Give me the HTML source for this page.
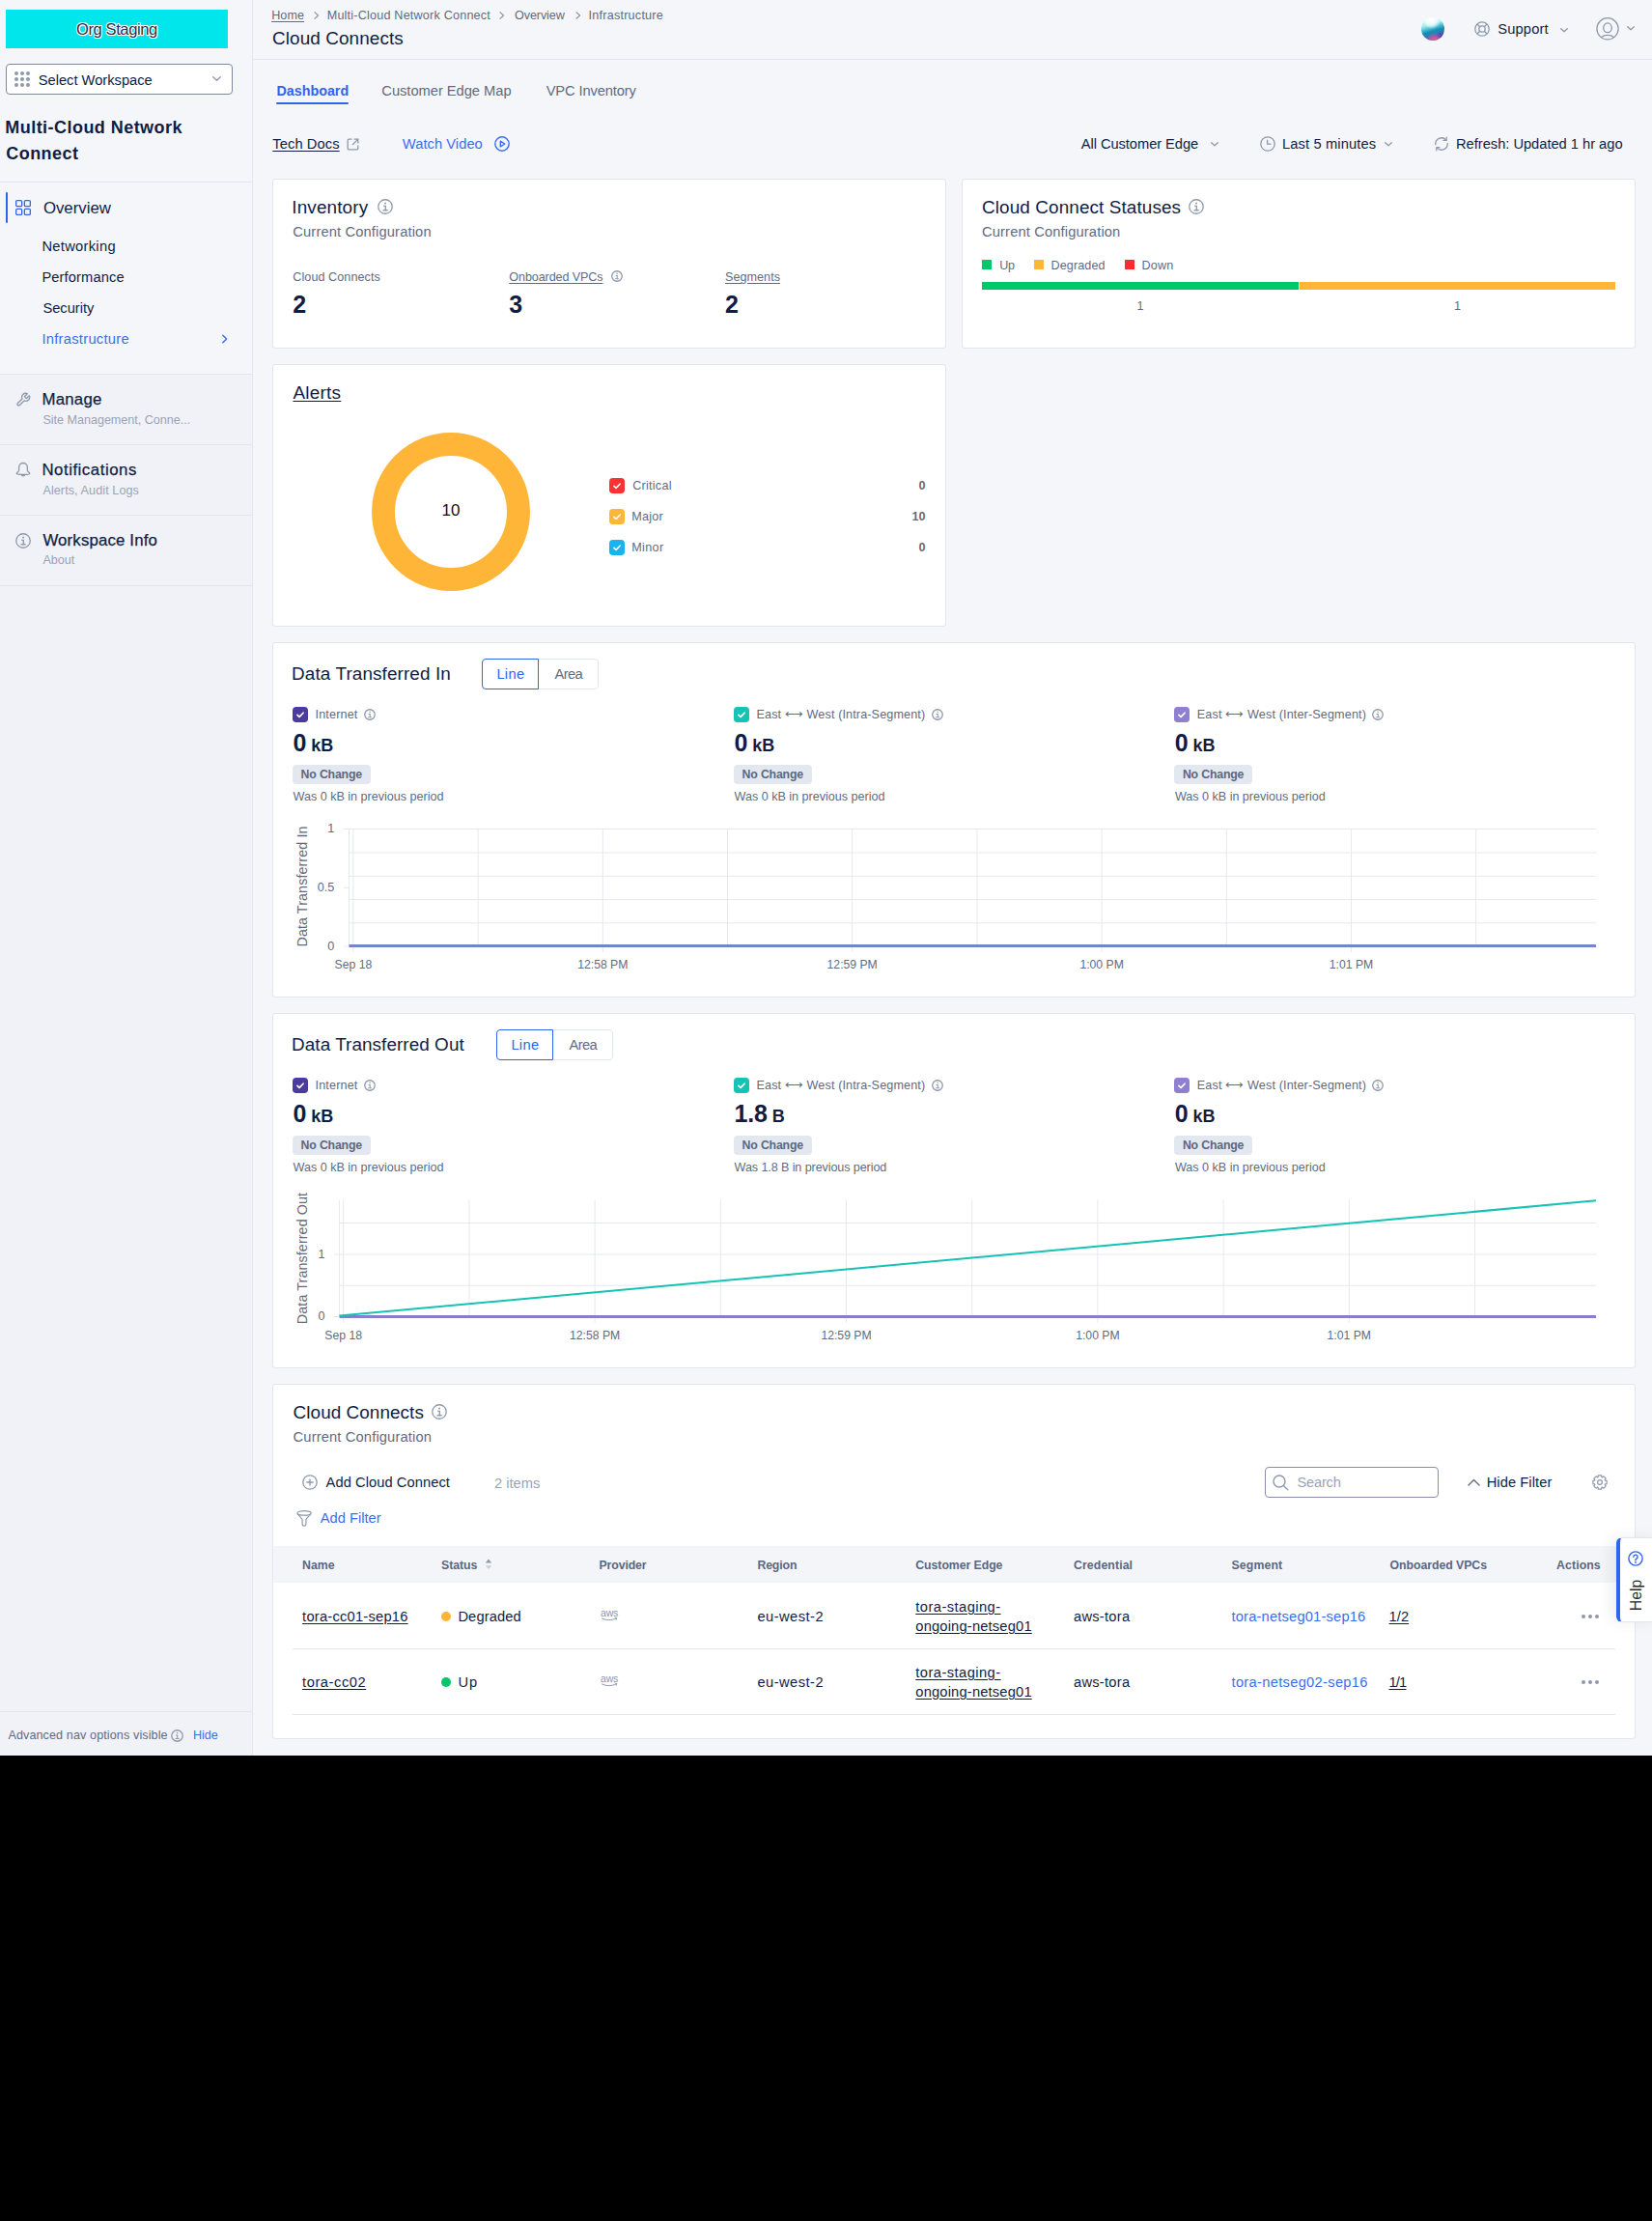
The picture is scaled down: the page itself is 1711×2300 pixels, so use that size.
<!DOCTYPE html>
<html><head><meta charset="utf-8"><title>Cloud Connects</title>
<style>
html,body{margin:0;padding:0;}
body{width:1711px;height:2300px;background:#000;overflow:hidden;font-family:"Liberation Sans", sans-serif;}
#page{position:absolute;left:0;top:0;width:1711px;height:1818px;background:#f5f6f9;overflow:hidden;}
.t{position:absolute;white-space:nowrap;font-family:"Liberation Sans", sans-serif;}
.a{position:absolute;}
.u{text-decoration:underline;text-underline-offset:2px;text-decoration-thickness:1px;}
.card{position:absolute;background:#fff;border:1px solid #e2e6ee;border-radius:3px;box-sizing:border-box;}
</style></head><body><div id="page">
<div class="a" style="left:0px;top:0px;width:261px;height:1818px;background:#f5f6f9;"></div>
<div class="a" style="left:0px;top:388px;width:261px;height:1430px;background:#f1f2f7;"></div>
<div class="a" style="left:261px;top:0px;width:1px;height:1818px;background:#e2e6ee;"></div>
<div class="a" style="left:6px;top:10px;width:230px;height:40px;background:#00e6ea;"></div>
<div class="t" style="left:79.00px;top:22.00px;font-size:16.5px;line-height:16.5px;color:#27304d;letter-spacing:-0.387px;text-shadow:1px 0 0 #fff,-1px 0 0 #fff,0 1px 0 #fff,0 -1px 0 #fff,0.7px 0.7px 0 #fff,-0.7px -0.7px 0 #fff,0.7px -0.7px 0 #fff,-0.7px 0.7px 0 #fff;">Org Staging</div>
<div class="a" style="left:6px;top:66px;width:235px;height:32px;background:#fff;border:1px solid #7d889e;border-radius:4px;box-sizing:border-box;"></div>
<svg class="a" style="left:15px;top:74px;" width="17" height="17" viewBox="0 0 17 17" fill="none"><circle cx="2" cy="2" r="2" fill="#8e99ac"/><circle cx="2" cy="8" r="2" fill="#8e99ac"/><circle cx="2" cy="14" r="2" fill="#8e99ac"/><circle cx="8" cy="2" r="2" fill="#8e99ac"/><circle cx="8" cy="8" r="2" fill="#8e99ac"/><circle cx="8" cy="14" r="2" fill="#8e99ac"/><circle cx="14" cy="2" r="2" fill="#8e99ac"/><circle cx="14" cy="8" r="2" fill="#8e99ac"/><circle cx="14" cy="14" r="2" fill="#8e99ac"/></svg>
<div class="t" style="left:39.70px;top:76.00px;font-size:14.7px;line-height:14.7px;color:#0f1d45;letter-spacing:-0.002px;">Select Workspace</div>
<svg class="a" style="left:219.5px;top:79.25px;" width="9" height="5.5" viewBox="0 0 9 5.5" fill="none"><path d="M0.7 0.7L4.5 4.3L8.3 0.7" stroke="#8e99ac" stroke-width="1.3" stroke-linecap="round" stroke-linejoin="round"/></svg>
<div class="t" style="left:5.30px;top:122.86px;font-size:18px;line-height:18px;color:#0f1d45;font-weight:700;letter-spacing:0.457px;">Multi-Cloud Network</div>
<div class="t" style="left:6.30px;top:149.76px;font-size:18px;line-height:18px;color:#0f1d45;font-weight:700;letter-spacing:0.432px;">Connect</div>
<div class="a" style="left:0px;top:188px;width:261px;height:1px;background:#e2e6ee;"></div>
<div class="a" style="left:6px;top:199px;width:2px;height:32px;background:#2f64f0;border-radius:1px;"></div>
<svg class="a" style="left:16px;top:207px;" width="16" height="16" viewBox="0 0 16 16" fill="none"><rect x="0.65" y="0.65" width="6" height="6" rx="1.2" stroke="#3165f0" stroke-width="1.3"/><rect x="9.35" y="0.65" width="6" height="6" rx="1.2" stroke="#3165f0" stroke-width="1.3"/><rect x="0.65" y="9.35" width="6" height="6" rx="1.2" stroke="#3165f0" stroke-width="1.3"/><rect x="9.35" y="9.35" width="6" height="6" rx="1.2" stroke="#3165f0" stroke-width="1.3"/></svg>
<div class="t" style="left:44.90px;top:208.00px;font-size:16.8px;line-height:16.8px;color:#0f1d45;letter-spacing:0.012px;">Overview</div>
<div class="t" style="left:43.40px;top:248.00px;font-size:14.7px;line-height:14.7px;color:#0f1d45;letter-spacing:0.3px;">Networking</div>
<div class="t" style="left:43.40px;top:280.00px;font-size:14.7px;line-height:14.7px;color:#0f1d45;letter-spacing:0.119px;">Performance</div>
<div class="t" style="left:44.40px;top:312.00px;font-size:14.7px;line-height:14.7px;color:#0f1d45;letter-spacing:-0.016px;">Security</div>
<div class="t" style="left:43.40px;top:344.00px;font-size:14.7px;line-height:14.7px;color:#3a6ef2;letter-spacing:0.288px;">Infrastructure</div>
<svg class="a" style="left:229px;top:346px;" width="8" height="10" viewBox="0 0 8 10" fill="none"><path d="M1.8 1.2L5.6 5L1.8 8.8" stroke="#3a6ef2" stroke-width="1.5" stroke-linecap="round" stroke-linejoin="round"/></svg>
<div class="a" style="left:0px;top:387px;width:261px;height:1px;background:#e2e6ee;"></div>
<svg class="a" style="left:16px;top:406px;" width="16" height="16" viewBox="0 0 16 16" fill="none"><g transform="scale(0.6667)"><path d="M14.7 6.3a1 1 0 0 0 0 1.4l1.6 1.6a1 1 0 0 0 1.4 0l3.77-3.77a6 6 0 0 1-7.94 7.94l-6.91 6.91a2.12 2.12 0 0 1-3-3l6.91-6.91a6 6 0 0 1 7.94-7.94l-3.76 3.76z" stroke="#8e99ac" stroke-width="2" stroke-linejoin="round"/></g></svg>
<div class="t" style="left:43.40px;top:406.00px;font-size:16.8px;line-height:16.8px;color:#0f1d45;letter-spacing:0.278px;-webkit-text-stroke:0.25px #0f1d45;">Manage</div>
<div class="t" style="left:44.40px;top:429.00px;font-size:12.6px;line-height:12.6px;color:#9aa3b5;letter-spacing:-0.021px;">Site Management, Conne...</div>
<div class="a" style="left:0px;top:460px;width:261px;height:1px;background:#e2e6ee;"></div>
<svg class="a" style="left:16px;top:478px;" width="16" height="16" viewBox="0 0 16 16" fill="none"><path d="M3.6 9.2V5.9A4.4 4.4 0 0 1 12.4 5.9V9.2C12.4 10.4 14.8 11.3 14.8 12.2C14.8 13 12.2 13.5 8 13.5C3.8 13.5 1.2 13 1.2 12.2C1.2 11.3 3.6 10.4 3.6 9.2Z" stroke="#8e99ac" stroke-width="1.3" stroke-linejoin="round"/><path d="M5.6 13.2A2.4 2.3 0 0 0 10.4 13.2Z" fill="#8e99ac"/></svg>
<div class="t" style="left:43.40px;top:479.00px;font-size:16.8px;line-height:16.8px;color:#0f1d45;letter-spacing:0.541px;-webkit-text-stroke:0.25px #0f1d45;">Notifications</div>
<div class="t" style="left:44.40px;top:502.00px;font-size:12.6px;line-height:12.6px;color:#9aa3b5;letter-spacing:0.088px;">Alerts, Audit Logs</div>
<div class="a" style="left:0px;top:533px;width:261px;height:1px;background:#e2e6ee;"></div>
<svg class="a" style="left:16.0px;top:552.0px;" width="16" height="16" viewBox="0 0 16 16" fill="none"><circle cx="8.0" cy="8.0" r="7.25" stroke="#8e99ac" stroke-width="1.3"/><circle cx="8.1" cy="4.4" r="1.0" fill="#8e99ac"/><path d="M6.2 7.3H8.3V11.7M5.6 11.7H10.5" stroke="#8e99ac" stroke-width="1.35"/></svg>
<div class="t" style="left:44.40px;top:552.00px;font-size:16.8px;line-height:16.8px;color:#0f1d45;letter-spacing:0.166px;-webkit-text-stroke:0.25px #0f1d45;">Workspace Info</div>
<div class="t" style="left:44.40px;top:574.00px;font-size:12.6px;line-height:12.6px;color:#9aa3b5;letter-spacing:-0.028px;">About</div>
<div class="a" style="left:0px;top:606px;width:261px;height:1px;background:#e2e6ee;"></div>
<div class="a" style="left:0px;top:1772px;width:261px;height:1px;background:#e2e6ee;"></div>
<div class="t" style="left:8.40px;top:1791.00px;font-size:12.6px;line-height:12.6px;color:#5f6b80;letter-spacing:0.103px;">Advanced nav options visible</div>
<svg class="a" style="left:176.5px;top:1790.5px;" width="13" height="13" viewBox="0 0 13 13" fill="none"><circle cx="6.5" cy="6.5" r="5.75" stroke="#8e99ac" stroke-width="1.3"/><circle cx="6.58125" cy="3.575" r="0.8125" fill="#8e99ac"/><path d="M5.0375000000000005 5.9312499999999995H6.74375V9.50625M4.55 9.50625H8.53125" stroke="#8e99ac" stroke-width="1.096875"/></svg>
<div class="t" style="left:199.90px;top:1791.00px;font-size:12.6px;line-height:12.6px;color:#3a6ef2;letter-spacing:0.001px;">Hide</div>
<div class="a" style="left:262px;top:61px;width:1449px;height:1px;background:#e2e6ee;"></div>
<div class="t" style="left:281.20px;top:10.00px;font-size:12.6px;line-height:12.6px;color:#5f6b80;letter-spacing:0.07px;text-decoration:underline;text-underline-offset:2px;">Home</div>
<svg class="a" style="left:325px;top:11.5px;" width="6" height="8" viewBox="0 0 6 8" fill="none"><path d="M1 0.8L4.6 4.0L1 7.2" stroke="#8e99ac" stroke-width="1.2" stroke-linecap="round" stroke-linejoin="round"/></svg>
<div class="t" style="left:338.70px;top:10.00px;font-size:12.6px;line-height:12.6px;color:#5f6b80;letter-spacing:0.205px;">Multi-Cloud Network Connect</div>
<svg class="a" style="left:517px;top:11.5px;" width="6" height="8" viewBox="0 0 6 8" fill="none"><path d="M1 0.8L4.6 4.0L1 7.2" stroke="#8e99ac" stroke-width="1.2" stroke-linecap="round" stroke-linejoin="round"/></svg>
<div class="t" style="left:533.00px;top:10.00px;font-size:12.6px;line-height:12.6px;color:#5f6b80;letter-spacing:-0.098px;">Overview</div>
<svg class="a" style="left:596px;top:11.5px;" width="6" height="8" viewBox="0 0 6 8" fill="none"><path d="M1 0.8L4.6 4.0L1 7.2" stroke="#8e99ac" stroke-width="1.2" stroke-linecap="round" stroke-linejoin="round"/></svg>
<div class="t" style="left:609.50px;top:10.00px;font-size:12.6px;line-height:12.6px;color:#5f6b80;letter-spacing:0.239px;">Infrastructure</div>
<div class="t" style="left:282.00px;top:31.00px;font-size:18.9px;line-height:18.9px;color:#0f1d45;letter-spacing:0.103px;">Cloud Connects</div>
<svg class="a" style="left:1472px;top:18px;" width="24" height="24" viewBox="0 0 24 24" fill="none"><defs><linearGradient id="sph" x1="0.3" y1="0" x2="0.6" y2="1"><stop offset="0" stop-color="#f4fbfd"/><stop offset="0.3" stop-color="#a2eef0"/><stop offset="0.6" stop-color="#0b92b6"/><stop offset="0.82" stop-color="#4d6db8"/><stop offset="1" stop-color="#c86aa0"/></linearGradient><radialGradient id="sphw" cx="0.45" cy="0.12" r="0.38"><stop offset="0" stop-color="#fff"/><stop offset="0.6" stop-color="#fff" stop-opacity="0.7"/><stop offset="1" stop-color="#fff" stop-opacity="0"/></radialGradient><radialGradient id="sphp" cx="0.55" cy="1" r="0.35"><stop offset="0" stop-color="#ee4f93"/><stop offset="1" stop-color="#ee4f93" stop-opacity="0"/></radialGradient><radialGradient id="sphb" cx="0.9" cy="0.85" r="0.3"><stop offset="0" stop-color="#4a3aa8"/><stop offset="1" stop-color="#4a3aa8" stop-opacity="0"/></radialGradient></defs><circle cx="12" cy="12" r="12" fill="url(#sph)"/><circle cx="12" cy="12" r="12" fill="url(#sphb)"/><circle cx="12" cy="12" r="12" fill="url(#sphp)"/><circle cx="12" cy="12" r="12" fill="url(#sphw)"/></svg>
<svg class="a" style="left:1527px;top:22px;" width="16" height="16" viewBox="0 0 16 16" fill="none"><circle cx="8" cy="8" r="7.2" stroke="#8e99ac" stroke-width="1.3"/><circle cx="8" cy="8" r="3.2" stroke="#8e99ac" stroke-width="1.3"/><path d="M3 3L5.7 5.7M13 3L10.3 5.7M3 13L5.7 10.3M13 13L10.3 10.3" stroke="#8e99ac" stroke-width="1.3"/></svg>
<div class="t" style="left:1551.20px;top:23.00px;font-size:14.7px;line-height:14.7px;color:#0f1d45;letter-spacing:0.173px;">Support</div>
<svg class="a" style="left:1616.0px;top:29.3px;" width="8" height="5.0" viewBox="0 0 8 5.0" fill="none"><path d="M0.7 0.7L4.0 3.8L7.3 0.7" stroke="#8e99ac" stroke-width="1.3" stroke-linecap="round" stroke-linejoin="round"/></svg>
<svg class="a" style="left:1653px;top:17.5px;" width="24" height="24" viewBox="0 0 24 24" fill="none"><circle cx="12" cy="11.8" r="11.1" stroke="#8e99ac" stroke-width="1.3"/><ellipse cx="12" cy="10.8" rx="4.3" ry="4.9" stroke="#8e99ac" stroke-width="1.3"/><path d="M5.4 20.6C7 19.1 9.3 18.4 12 18.4S17 19.1 18.6 20.6" stroke="#8e99ac" stroke-width="1.3"/></svg>
<svg class="a" style="left:1685.0px;top:27.0px;" width="8" height="5.0" viewBox="0 0 8 5.0" fill="none"><path d="M0.7 0.7L4.0 3.8L7.3 0.7" stroke="#8e99ac" stroke-width="1.3" stroke-linecap="round" stroke-linejoin="round"/></svg>
<div class="t" style="left:286.50px;top:87.00px;font-size:14.3px;line-height:14.3px;color:#2f64f0;font-weight:700;letter-spacing:-0.005px;">Dashboard</div>
<div class="a" style="left:286px;top:106px;width:75px;height:2px;background:#2f64f0;border-radius:1px;"></div>
<div class="t" style="left:395.30px;top:87.00px;font-size:14.7px;line-height:14.7px;color:#5f6b80;letter-spacing:-0.027px;">Customer Edge Map</div>
<div class="t" style="left:565.70px;top:87.00px;font-size:14.7px;line-height:14.7px;color:#5f6b80;letter-spacing:-0.129px;">VPC Inventory</div>
<div class="t" style="left:282.30px;top:142.00px;font-size:14.7px;line-height:14.7px;color:#0f1d45;letter-spacing:0.085px;text-decoration:underline;text-underline-offset:1.5px;">Tech Docs</div>
<svg class="a" style="left:359px;top:143px;" width="13" height="13" viewBox="0 0 13 13" fill="none"><path d="M5.5 1.2H2.2a1 1 0 0 0-1 1v8.6a1 1 0 0 0 1 1h8.6a1 1 0 0 0 1-1V7.5" stroke="#8e99ac" stroke-width="1.3"/><path d="M7.6 1.2h4.2v4.2M11.6 1.4L6 7" stroke="#8e99ac" stroke-width="1.3"/></svg>
<div class="t" style="left:416.80px;top:142.00px;font-size:14.7px;line-height:14.7px;color:#3a6ef2;letter-spacing:0.051px;">Watch Video</div>
<svg class="a" style="left:512px;top:141px;" width="16" height="16" viewBox="0 0 16 16" fill="none"><circle cx="8" cy="8" r="7.2" stroke="#3a6ef2" stroke-width="1.4"/><path d="M6.3 5.2L10.8 8L6.3 10.8z" stroke="#3a6ef2" stroke-width="1.4" stroke-linejoin="round"/></svg>
<div class="t" style="left:1119.80px;top:142.00px;font-size:14.7px;line-height:14.7px;color:#0f1d45;letter-spacing:-0.067px;">All Customer Edge</div>
<svg class="a" style="left:1253.5px;top:147.0px;" width="8" height="5.0" viewBox="0 0 8 5.0" fill="none"><path d="M0.7 0.7L4.0 3.8L7.3 0.7" stroke="#8e99ac" stroke-width="1.3" stroke-linecap="round" stroke-linejoin="round"/></svg>
<svg class="a" style="left:1305px;top:141px;" width="16" height="16" viewBox="0 0 16 16" fill="none"><circle cx="8" cy="8" r="7.2" stroke="#8e99ac" stroke-width="1.3"/><path d="M7.6 4.2V8.2H11" stroke="#8e99ac" stroke-width="1.3" stroke-linecap="round" stroke-linejoin="round"/></svg>
<div class="t" style="left:1328.00px;top:142.00px;font-size:14.7px;line-height:14.7px;color:#0f1d45;letter-spacing:0.117px;">Last 5 minutes</div>
<svg class="a" style="left:1434.0px;top:147.0px;" width="8" height="5.0" viewBox="0 0 8 5.0" fill="none"><path d="M0.7 0.7L4.0 3.8L7.3 0.7" stroke="#8e99ac" stroke-width="1.3" stroke-linecap="round" stroke-linejoin="round"/></svg>
<svg class="a" style="left:1485px;top:141px;" width="16" height="16" viewBox="0 0 16 16" fill="none"><path d="M1.8 8.6A6.2 6.2 0 0 1 12.6 3.9M14.2 7.4A6.2 6.2 0 0 1 3.4 12.1" stroke="#8e99ac" stroke-width="1.3" stroke-linecap="round"/><path d="M13.2 1.2V4.4H10M2.8 14.8V11.6H6" stroke="#8e99ac" stroke-width="1.3" stroke-linecap="round" stroke-linejoin="round"/></svg>
<div class="t" style="left:1508.00px;top:142.00px;font-size:14.7px;line-height:14.7px;color:#0f1d45;letter-spacing:-0.022px;">Refresh: Updated 1 hr ago</div>
<div class="card" style="left:282px;top:185px;width:698px;height:176px;"></div>
<div class="t" style="left:302.30px;top:206.00px;font-size:18.9px;line-height:18.9px;color:#0f1d45;letter-spacing:0.143px;">Inventory</div>
<svg class="a" style="left:391.0px;top:206.0px;" width="16" height="16" viewBox="0 0 16 16" fill="none"><circle cx="8.0" cy="8.0" r="7.25" stroke="#8e99ac" stroke-width="1.3"/><circle cx="8.1" cy="4.4" r="1.0" fill="#8e99ac"/><path d="M6.2 7.3H8.3V11.7M5.6 11.7H10.5" stroke="#8e99ac" stroke-width="1.35"/></svg>
<div class="t" style="left:303.30px;top:233.00px;font-size:14.7px;line-height:14.7px;color:#5f6b80;letter-spacing:0.142px;">Current Configuration</div>
<div class="t" style="left:303.30px;top:281.00px;font-size:12.6px;line-height:12.6px;color:#5f6b80;letter-spacing:0.068px;">Cloud Connects</div>
<div class="t" style="left:527.30px;top:281.00px;font-size:12.6px;line-height:12.6px;color:#5f6b80;letter-spacing:-0.109px;text-decoration:underline;text-underline-offset:1.5px;">Onboarded VPCs</div>
<svg class="a" style="left:632.5px;top:279.7px;" width="12" height="12" viewBox="0 0 12 12" fill="none"><circle cx="6.0" cy="6.0" r="5.25" stroke="#8e99ac" stroke-width="1.3"/><circle cx="6.074999999999999" cy="3.3000000000000003" r="0.75" fill="#8e99ac"/><path d="M4.65 5.475H6.2250000000000005V8.774999999999999M4.199999999999999 8.774999999999999H7.875" stroke="#8e99ac" stroke-width="1.0125000000000002"/></svg>
<div class="t" style="left:751.00px;top:281.00px;font-size:12.6px;line-height:12.6px;color:#5f6b80;letter-spacing:0.042px;text-decoration:underline;text-underline-offset:1.5px;">Segments</div>
<div class="t" style="left:303.30px;top:302.84px;font-size:25px;line-height:25px;color:#0f1d45;font-weight:700;">2</div>
<div class="t" style="left:527.30px;top:302.84px;font-size:25px;line-height:25px;color:#0f1d45;font-weight:700;">3</div>
<div class="t" style="left:751.00px;top:302.84px;font-size:25px;line-height:25px;color:#0f1d45;font-weight:700;">2</div>
<div class="card" style="left:996px;top:185px;width:698px;height:176px;"></div>
<div class="t" style="left:1017.00px;top:206.00px;font-size:18.9px;line-height:18.9px;color:#0f1d45;letter-spacing:0.111px;">Cloud Connect Statuses</div>
<svg class="a" style="left:1231.0px;top:206.0px;" width="16" height="16" viewBox="0 0 16 16" fill="none"><circle cx="8.0" cy="8.0" r="7.25" stroke="#8e99ac" stroke-width="1.3"/><circle cx="8.1" cy="4.4" r="1.0" fill="#8e99ac"/><path d="M6.2 7.3H8.3V11.7M5.6 11.7H10.5" stroke="#8e99ac" stroke-width="1.35"/></svg>
<div class="t" style="left:1017.00px;top:233.00px;font-size:14.7px;line-height:14.7px;color:#5f6b80;letter-spacing:0.142px;">Current Configuration</div>
<div class="a" style="left:1017px;top:269px;width:10px;height:10px;background:#00c767;"></div>
<div class="t" style="left:1035.30px;top:269.00px;font-size:12.6px;line-height:12.6px;color:#5f6b80;letter-spacing:-0.395px;">Up</div>
<div class="a" style="left:1071px;top:269px;width:10px;height:10px;background:#ffb537;"></div>
<div class="t" style="left:1088.50px;top:269.00px;font-size:12.6px;line-height:12.6px;color:#5f6b80;letter-spacing:0.099px;">Degraded</div>
<div class="a" style="left:1165px;top:269px;width:10px;height:10px;background:#ff2a2a;"></div>
<div class="t" style="left:1182.60px;top:269.00px;font-size:12.6px;line-height:12.6px;color:#5f6b80;letter-spacing:0.135px;">Down</div>
<div class="a" style="left:1017px;top:292px;width:328px;height:8px;background:#00c767;"></div>
<div class="a" style="left:1346px;top:292px;width:327px;height:8px;background:#ffb537;"></div>
<div class="t" style="left:981.00px;width:400px;text-align:center;top:311.00px;font-size:12.6px;line-height:12.6px;color:#5f6b80;">1</div>
<div class="t" style="left:1309.50px;width:400px;text-align:center;top:311.00px;font-size:12.6px;line-height:12.6px;color:#5f6b80;">1</div>
<div class="card" style="left:282px;top:377px;width:698px;height:272px;"></div>
<div class="t" style="left:303.40px;top:398.00px;font-size:18.9px;line-height:18.9px;color:#0f1d45;letter-spacing:0.272px;text-decoration:underline;text-underline-offset:2px;">Alerts</div>
<svg class="a" style="left:385px;top:448px;" width="164" height="164" viewBox="0 0 164 164" fill="none"><circle cx="82" cy="82" r="70" stroke="#ffb537" stroke-width="24"/></svg>
<div class="t" style="left:267.00px;width:400px;text-align:center;top:520.11px;font-size:17px;line-height:17px;color:#111;">10</div>
<svg class="a" style="left:631px;top:495px;" width="16" height="16" viewBox="0 0 16 16" fill="none"><rect width="16" height="16" rx="3.8" fill="#ff3131"/><path d="M4.9 8.4L7.1 10.4L11.1 6.2" stroke="#fff" stroke-width="1.6" stroke-linecap="round" stroke-linejoin="round"/></svg>
<div class="t" style="left:655.20px;top:497.00px;font-size:12.6px;line-height:12.6px;color:#5f6b80;letter-spacing:0.259px;">Critical</div>
<div class="t" style="right:752.50px;top:497.00px;font-size:12.6px;line-height:12.6px;color:#5f6b80;font-weight:700;">0</div>
<svg class="a" style="left:631px;top:527px;" width="16" height="16" viewBox="0 0 16 16" fill="none"><rect width="16" height="16" rx="3.8" fill="#ffb537"/><path d="M4.9 8.4L7.1 10.4L11.1 6.2" stroke="#fff" stroke-width="1.6" stroke-linecap="round" stroke-linejoin="round"/></svg>
<div class="t" style="left:654.20px;top:529.00px;font-size:12.6px;line-height:12.6px;color:#5f6b80;letter-spacing:0.276px;">Major</div>
<div class="t" style="right:752.50px;top:529.00px;font-size:12.6px;line-height:12.6px;color:#5f6b80;font-weight:700;">10</div>
<svg class="a" style="left:631px;top:559px;" width="16" height="16" viewBox="0 0 16 16" fill="none"><rect width="16" height="16" rx="3.8" fill="#19b3f2"/><path d="M4.9 8.4L7.1 10.4L11.1 6.2" stroke="#fff" stroke-width="1.6" stroke-linecap="round" stroke-linejoin="round"/></svg>
<div class="t" style="left:654.20px;top:561.00px;font-size:12.6px;line-height:12.6px;color:#5f6b80;letter-spacing:0.376px;">Minor</div>
<div class="t" style="right:752.50px;top:561.00px;font-size:12.6px;line-height:12.6px;color:#5f6b80;font-weight:700;">0</div>
<div class="card" style="left:282px;top:665px;width:1412px;height:368px;"></div>
<div class="t" style="left:302.10px;top:689.00px;font-size:18.9px;line-height:18.9px;color:#0f1d45;letter-spacing:0.107px;">Data Transferred In</div>
<div class="a" style="left:557px;top:682px;width:63px;height:32px;background:#fff;border:1px solid #e2e6ee;border-radius:0 4px 4px 0;box-sizing:border-box;"></div>
<div class="a" style="left:499px;top:682px;width:59px;height:32px;background:#fff;border:1px solid #2f64f0;border-radius:4px 0 0 4px;box-sizing:border-box;"></div>
<div class="t" style="left:514.40px;top:691.00px;font-size:14.7px;line-height:14.7px;color:#2f64f0;letter-spacing:0.3px;">Line</div>
<div class="t" style="left:574.50px;top:691.00px;font-size:14.7px;line-height:14.7px;color:#5f6b80;letter-spacing:-0.585px;">Area</div>
<svg class="a" style="left:303px;top:731.8px;" width="16" height="16" viewBox="0 0 16 16" fill="none"><rect width="16" height="16" rx="3.8" fill="#4b3ba0"/><path d="M4.9 8.4L7.1 10.4L11.1 6.2" stroke="#fff" stroke-width="1.6" stroke-linecap="round" stroke-linejoin="round"/></svg>
<div class="t" style="left:326.50px;top:734.00px;font-size:12.6px;line-height:12.6px;color:#5f6b80;letter-spacing:0.156px;">Internet</div>
<svg class="a" style="left:377.0px;top:733.8px;" width="12" height="12" viewBox="0 0 12 12" fill="none"><circle cx="6.0" cy="6.0" r="5.25" stroke="#8e99ac" stroke-width="1.3"/><circle cx="6.074999999999999" cy="3.3000000000000003" r="0.75" fill="#8e99ac"/><path d="M4.65 5.475H6.2250000000000005V8.774999999999999M4.199999999999999 8.774999999999999H7.875" stroke="#8e99ac" stroke-width="1.0125000000000002"/></svg>
<div class="t" style="left:303.50px;top:757.04px;font-size:25px;line-height:25px;color:#0f1d45;font-weight:700;letter-spacing:-0.2px;">0<span style="font-size:18px;margin-left:5px;letter-spacing:0">kB</span></div>
<div class="a" style="left:303px;top:792px;width:81px;height:20px;background:#e3e7f0;border-radius:4px;"></div>
<div class="t" style="left:311.60px;top:796.00px;font-size:12.3px;line-height:12.3px;color:#5a6780;font-weight:700;letter-spacing:-0.17px;">No Change</div>
<div class="t" style="left:303.60px;top:819.00px;font-size:12.6px;line-height:12.6px;color:#5f6b80;letter-spacing:-0.02px;">Was 0 kB in previous period</div>
<svg class="a" style="left:760px;top:731.8px;" width="16" height="16" viewBox="0 0 16 16" fill="none"><rect width="16" height="16" rx="3.8" fill="#14c3b4"/><path d="M4.9 8.4L7.1 10.4L11.1 6.2" stroke="#fff" stroke-width="1.6" stroke-linecap="round" stroke-linejoin="round"/></svg>
<div class="t" style="left:783.50px;top:734.00px;font-size:12.6px;line-height:12.6px;color:#5f6b80;letter-spacing:0.125px;">East ⟷ West (Intra-Segment)</div>
<svg class="a" style="left:964.5px;top:733.8px;" width="12" height="12" viewBox="0 0 12 12" fill="none"><circle cx="6.0" cy="6.0" r="5.25" stroke="#8e99ac" stroke-width="1.3"/><circle cx="6.074999999999999" cy="3.3000000000000003" r="0.75" fill="#8e99ac"/><path d="M4.65 5.475H6.2250000000000005V8.774999999999999M4.199999999999999 8.774999999999999H7.875" stroke="#8e99ac" stroke-width="1.0125000000000002"/></svg>
<div class="t" style="left:760.50px;top:757.04px;font-size:25px;line-height:25px;color:#0f1d45;font-weight:700;letter-spacing:-0.2px;">0<span style="font-size:18px;margin-left:5px;letter-spacing:0">kB</span></div>
<div class="a" style="left:760px;top:792px;width:81px;height:20px;background:#e3e7f0;border-radius:4px;"></div>
<div class="t" style="left:768.60px;top:796.00px;font-size:12.3px;line-height:12.3px;color:#5a6780;font-weight:700;letter-spacing:-0.17px;">No Change</div>
<div class="t" style="left:760.60px;top:819.00px;font-size:12.6px;line-height:12.6px;color:#5f6b80;letter-spacing:-0.02px;">Was 0 kB in previous period</div>
<svg class="a" style="left:1216.3px;top:731.8px;" width="16" height="16" viewBox="0 0 16 16" fill="none"><rect width="16" height="16" rx="3.8" fill="#8e7fd1"/><path d="M4.9 8.4L7.1 10.4L11.1 6.2" stroke="#fff" stroke-width="1.6" stroke-linecap="round" stroke-linejoin="round"/></svg>
<div class="t" style="left:1239.80px;top:734.00px;font-size:12.6px;line-height:12.6px;color:#5f6b80;letter-spacing:0.144px;">East ⟷ West (Inter-Segment)</div>
<svg class="a" style="left:1421.0px;top:733.8px;" width="12" height="12" viewBox="0 0 12 12" fill="none"><circle cx="6.0" cy="6.0" r="5.25" stroke="#8e99ac" stroke-width="1.3"/><circle cx="6.074999999999999" cy="3.3000000000000003" r="0.75" fill="#8e99ac"/><path d="M4.65 5.475H6.2250000000000005V8.774999999999999M4.199999999999999 8.774999999999999H7.875" stroke="#8e99ac" stroke-width="1.0125000000000002"/></svg>
<div class="t" style="left:1216.80px;top:757.04px;font-size:25px;line-height:25px;color:#0f1d45;font-weight:700;letter-spacing:-0.2px;">0<span style="font-size:18px;margin-left:5px;letter-spacing:0">kB</span></div>
<div class="a" style="left:1216.3px;top:792px;width:81px;height:20px;background:#e3e7f0;border-radius:4px;"></div>
<div class="t" style="left:1224.90px;top:796.00px;font-size:12.3px;line-height:12.3px;color:#5a6780;font-weight:700;letter-spacing:-0.17px;">No Change</div>
<div class="t" style="left:1216.90px;top:819.00px;font-size:12.6px;line-height:12.6px;color:#5f6b80;letter-spacing:-0.02px;">Was 0 kB in previous period</div>
<svg class="a" style="left:0;top:0" width="1711" height="1818" viewBox="0 0 1711 1818" fill="none"><line x1="361.5" y1="858.5" x2="1653" y2="858.5" stroke="#e6e8ef" stroke-width="1"/><line x1="361.5" y1="883" x2="1653" y2="883" stroke="#e6e8ef" stroke-width="1"/><line x1="361.5" y1="907.3" x2="1653" y2="907.3" stroke="#e6e8ef" stroke-width="1"/><line x1="361.5" y1="931.5" x2="1653" y2="931.5" stroke="#e6e8ef" stroke-width="1"/><line x1="361.5" y1="955.8" x2="1653" y2="955.8" stroke="#e6e8ef" stroke-width="1"/><line x1="365.9" y1="858.5" x2="365.9" y2="986" stroke="#e6e8ef" stroke-width="1"/><line x1="495.09999999999997" y1="858.5" x2="495.09999999999997" y2="980" stroke="#e6e8ef" stroke-width="1"/><line x1="624.3" y1="858.5" x2="624.3" y2="986" stroke="#e6e8ef" stroke-width="1"/><line x1="753.5" y1="858.5" x2="753.5" y2="980" stroke="#e6e8ef" stroke-width="1"/><line x1="882.6999999999999" y1="858.5" x2="882.6999999999999" y2="986" stroke="#e6e8ef" stroke-width="1"/><line x1="1011.9" y1="858.5" x2="1011.9" y2="980" stroke="#e6e8ef" stroke-width="1"/><line x1="1141.1" y1="858.5" x2="1141.1" y2="986" stroke="#e6e8ef" stroke-width="1"/><line x1="1270.2999999999997" y1="858.5" x2="1270.2999999999997" y2="980" stroke="#e6e8ef" stroke-width="1"/><line x1="1399.5" y1="858.5" x2="1399.5" y2="986" stroke="#e6e8ef" stroke-width="1"/><line x1="1528.6999999999998" y1="858.5" x2="1528.6999999999998" y2="980" stroke="#e6e8ef" stroke-width="1"/><line x1="361.5" y1="858.5" x2="361.5" y2="980" stroke="#e6e8ef" stroke-width="1"/><line x1="355.5" y1="858.5" x2="361.5" y2="858.5" stroke="#e6e8ef" stroke-width="1"/><line x1="355.5" y1="919.3" x2="361.5" y2="919.3" stroke="#e6e8ef" stroke-width="1"/><line x1="355.5" y1="980" x2="361.5" y2="980" stroke="#e6e8ef" stroke-width="1"/><line x1="361.5" y1="979.6" x2="1653" y2="979.6" stroke="#7585cd" stroke-width="3"/></svg>
<div class="t" style="right:1364.70px;top:852.00px;font-size:12.6px;line-height:12.6px;color:#5f6b80;">1</div>
<div class="t" style="right:1364.70px;top:913.00px;font-size:12.6px;line-height:12.6px;color:#5f6b80;">0.5</div>
<div class="t" style="right:1364.70px;top:974.00px;font-size:12.6px;line-height:12.6px;color:#5f6b80;">0</div>
<div class="t" style="left:165.90px;width:400px;text-align:center;top:993.00px;font-size:12.2px;line-height:12.2px;color:#5f6b80;">Sep 18</div>
<div class="t" style="left:424.30px;width:400px;text-align:center;top:993.00px;font-size:12.2px;line-height:12.2px;color:#5f6b80;">12:58 PM</div>
<div class="t" style="left:682.70px;width:400px;text-align:center;top:993.00px;font-size:12.2px;line-height:12.2px;color:#5f6b80;">12:59 PM</div>
<div class="t" style="left:941.10px;width:400px;text-align:center;top:993.00px;font-size:12.2px;line-height:12.2px;color:#5f6b80;">1:00 PM</div>
<div class="t" style="left:1199.50px;width:400px;text-align:center;top:993.00px;font-size:12.2px;line-height:12.2px;color:#5f6b80;">1:01 PM</div>
<div class="t" style="left:213px;top:909px;width:200px;height:18px;line-height:18px;text-align:center;font-size:14.3px;color:#5f6b80;transform:rotate(-90deg);letter-spacing:0.1px">Data Transferred In</div>
<div class="card" style="left:282px;top:1049px;width:1412px;height:368px;"></div>
<div class="t" style="left:302.10px;top:1073.00px;font-size:18.9px;line-height:18.9px;color:#0f1d45;letter-spacing:0.061px;">Data Transferred Out</div>
<div class="a" style="left:572px;top:1066px;width:63px;height:32px;background:#fff;border:1px solid #e2e6ee;border-radius:0 4px 4px 0;box-sizing:border-box;"></div>
<div class="a" style="left:514px;top:1066px;width:59px;height:32px;background:#fff;border:1px solid #2f64f0;border-radius:4px 0 0 4px;box-sizing:border-box;"></div>
<div class="t" style="left:529.40px;top:1075.00px;font-size:14.7px;line-height:14.7px;color:#2f64f0;letter-spacing:0.3px;">Line</div>
<div class="t" style="left:589.50px;top:1075.00px;font-size:14.7px;line-height:14.7px;color:#5f6b80;letter-spacing:-0.585px;">Area</div>
<svg class="a" style="left:303px;top:1115.8px;" width="16" height="16" viewBox="0 0 16 16" fill="none"><rect width="16" height="16" rx="3.8" fill="#4b3ba0"/><path d="M4.9 8.4L7.1 10.4L11.1 6.2" stroke="#fff" stroke-width="1.6" stroke-linecap="round" stroke-linejoin="round"/></svg>
<div class="t" style="left:326.50px;top:1118.00px;font-size:12.6px;line-height:12.6px;color:#5f6b80;letter-spacing:0.156px;">Internet</div>
<svg class="a" style="left:377.0px;top:1117.8px;" width="12" height="12" viewBox="0 0 12 12" fill="none"><circle cx="6.0" cy="6.0" r="5.25" stroke="#8e99ac" stroke-width="1.3"/><circle cx="6.074999999999999" cy="3.3000000000000003" r="0.75" fill="#8e99ac"/><path d="M4.65 5.475H6.2250000000000005V8.774999999999999M4.199999999999999 8.774999999999999H7.875" stroke="#8e99ac" stroke-width="1.0125000000000002"/></svg>
<div class="t" style="left:303.50px;top:1141.04px;font-size:25px;line-height:25px;color:#0f1d45;font-weight:700;letter-spacing:-0.2px;">0<span style="font-size:18px;margin-left:5px;letter-spacing:0">kB</span></div>
<div class="a" style="left:303px;top:1176px;width:81px;height:20px;background:#e3e7f0;border-radius:4px;"></div>
<div class="t" style="left:311.60px;top:1180.00px;font-size:12.3px;line-height:12.3px;color:#5a6780;font-weight:700;letter-spacing:-0.17px;">No Change</div>
<div class="t" style="left:303.60px;top:1203.00px;font-size:12.6px;line-height:12.6px;color:#5f6b80;letter-spacing:-0.02px;">Was 0 kB in previous period</div>
<svg class="a" style="left:760px;top:1115.8px;" width="16" height="16" viewBox="0 0 16 16" fill="none"><rect width="16" height="16" rx="3.8" fill="#14c3b4"/><path d="M4.9 8.4L7.1 10.4L11.1 6.2" stroke="#fff" stroke-width="1.6" stroke-linecap="round" stroke-linejoin="round"/></svg>
<div class="t" style="left:783.50px;top:1118.00px;font-size:12.6px;line-height:12.6px;color:#5f6b80;letter-spacing:0.125px;">East ⟷ West (Intra-Segment)</div>
<svg class="a" style="left:964.5px;top:1117.8px;" width="12" height="12" viewBox="0 0 12 12" fill="none"><circle cx="6.0" cy="6.0" r="5.25" stroke="#8e99ac" stroke-width="1.3"/><circle cx="6.074999999999999" cy="3.3000000000000003" r="0.75" fill="#8e99ac"/><path d="M4.65 5.475H6.2250000000000005V8.774999999999999M4.199999999999999 8.774999999999999H7.875" stroke="#8e99ac" stroke-width="1.0125000000000002"/></svg>
<div class="t" style="left:760.50px;top:1141.04px;font-size:25px;line-height:25px;color:#0f1d45;font-weight:700;letter-spacing:-0.2px;">1.8<span style="font-size:18px;margin-left:5px;letter-spacing:0">B</span></div>
<div class="a" style="left:760px;top:1176px;width:81px;height:20px;background:#e3e7f0;border-radius:4px;"></div>
<div class="t" style="left:768.60px;top:1180.00px;font-size:12.3px;line-height:12.3px;color:#5a6780;font-weight:700;letter-spacing:-0.17px;">No Change</div>
<div class="t" style="left:760.60px;top:1203.00px;font-size:12.6px;line-height:12.6px;color:#5f6b80;letter-spacing:-0.105px;">Was 1.8 B in previous period</div>
<svg class="a" style="left:1216.3px;top:1115.8px;" width="16" height="16" viewBox="0 0 16 16" fill="none"><rect width="16" height="16" rx="3.8" fill="#8e7fd1"/><path d="M4.9 8.4L7.1 10.4L11.1 6.2" stroke="#fff" stroke-width="1.6" stroke-linecap="round" stroke-linejoin="round"/></svg>
<div class="t" style="left:1239.80px;top:1118.00px;font-size:12.6px;line-height:12.6px;color:#5f6b80;letter-spacing:0.144px;">East ⟷ West (Inter-Segment)</div>
<svg class="a" style="left:1421.0px;top:1117.8px;" width="12" height="12" viewBox="0 0 12 12" fill="none"><circle cx="6.0" cy="6.0" r="5.25" stroke="#8e99ac" stroke-width="1.3"/><circle cx="6.074999999999999" cy="3.3000000000000003" r="0.75" fill="#8e99ac"/><path d="M4.65 5.475H6.2250000000000005V8.774999999999999M4.199999999999999 8.774999999999999H7.875" stroke="#8e99ac" stroke-width="1.0125000000000002"/></svg>
<div class="t" style="left:1216.80px;top:1141.04px;font-size:25px;line-height:25px;color:#0f1d45;font-weight:700;letter-spacing:-0.2px;">0<span style="font-size:18px;margin-left:5px;letter-spacing:0">kB</span></div>
<div class="a" style="left:1216.3px;top:1176px;width:81px;height:20px;background:#e3e7f0;border-radius:4px;"></div>
<div class="t" style="left:1224.90px;top:1180.00px;font-size:12.3px;line-height:12.3px;color:#5a6780;font-weight:700;letter-spacing:-0.17px;">No Change</div>
<div class="t" style="left:1216.90px;top:1203.00px;font-size:12.6px;line-height:12.6px;color:#5f6b80;letter-spacing:-0.02px;">Was 0 kB in previous period</div>
<svg class="a" style="left:0;top:0" width="1711" height="1818" viewBox="0 0 1711 1818" fill="none"><line x1="351.6" y1="1266.5" x2="1653" y2="1266.5" stroke="#e6e8ef" stroke-width="1"/><line x1="351.6" y1="1299" x2="1653" y2="1299" stroke="#e6e8ef" stroke-width="1"/><line x1="351.6" y1="1331.2" x2="1653" y2="1331.2" stroke="#e6e8ef" stroke-width="1"/><line x1="355.7" y1="1242.6" x2="355.7" y2="1369.5" stroke="#e6e8ef" stroke-width="1"/><line x1="485.9" y1="1242.6" x2="485.9" y2="1363.5" stroke="#e6e8ef" stroke-width="1"/><line x1="616.0999999999999" y1="1242.6" x2="616.0999999999999" y2="1369.5" stroke="#e6e8ef" stroke-width="1"/><line x1="746.3" y1="1242.6" x2="746.3" y2="1363.5" stroke="#e6e8ef" stroke-width="1"/><line x1="876.5" y1="1242.6" x2="876.5" y2="1369.5" stroke="#e6e8ef" stroke-width="1"/><line x1="1006.7" y1="1242.6" x2="1006.7" y2="1363.5" stroke="#e6e8ef" stroke-width="1"/><line x1="1136.8999999999999" y1="1242.6" x2="1136.8999999999999" y2="1369.5" stroke="#e6e8ef" stroke-width="1"/><line x1="1267.1" y1="1242.6" x2="1267.1" y2="1363.5" stroke="#e6e8ef" stroke-width="1"/><line x1="1397.3" y1="1242.6" x2="1397.3" y2="1369.5" stroke="#e6e8ef" stroke-width="1"/><line x1="1527.5" y1="1242.6" x2="1527.5" y2="1363.5" stroke="#e6e8ef" stroke-width="1"/><line x1="351.6" y1="1242.6" x2="351.6" y2="1363.5" stroke="#e6e8ef" stroke-width="1"/><line x1="345.6" y1="1299" x2="351.6" y2="1299" stroke="#e6e8ef" stroke-width="1"/><line x1="345.6" y1="1363.5" x2="351.6" y2="1363.5" stroke="#e6e8ef" stroke-width="1"/><line x1="351.6" y1="1363.5" x2="1653" y2="1363.5" stroke="#8a7ccc" stroke-width="3"/><line x1="351.6" y1="1362.6" x2="1653" y2="1243.3" stroke="#14c3b4" stroke-width="2"/></svg>
<div class="t" style="right:1374.40px;top:1293.00px;font-size:12.6px;line-height:12.6px;color:#5f6b80;">1</div>
<div class="t" style="right:1374.40px;top:1357.00px;font-size:12.6px;line-height:12.6px;color:#5f6b80;">0</div>
<div class="t" style="left:155.70px;width:400px;text-align:center;top:1377.00px;font-size:12.2px;line-height:12.2px;color:#5f6b80;">Sep 18</div>
<div class="t" style="left:416.10px;width:400px;text-align:center;top:1377.00px;font-size:12.2px;line-height:12.2px;color:#5f6b80;">12:58 PM</div>
<div class="t" style="left:676.50px;width:400px;text-align:center;top:1377.00px;font-size:12.2px;line-height:12.2px;color:#5f6b80;">12:59 PM</div>
<div class="t" style="left:936.90px;width:400px;text-align:center;top:1377.00px;font-size:12.2px;line-height:12.2px;color:#5f6b80;">1:00 PM</div>
<div class="t" style="left:1197.30px;width:400px;text-align:center;top:1377.00px;font-size:12.2px;line-height:12.2px;color:#5f6b80;">1:01 PM</div>
<div class="t" style="left:213px;top:1293.7px;width:200px;height:18px;line-height:18px;text-align:center;font-size:14.3px;color:#5f6b80;transform:rotate(-90deg);letter-spacing:0.1px">Data Transferred Out</div>
<div class="card" style="left:282px;top:1433px;width:1412px;height:368px;"></div>
<div class="t" style="left:303.60px;top:1454.00px;font-size:18.9px;line-height:18.9px;color:#0f1d45;letter-spacing:0.064px;">Cloud Connects</div>
<svg class="a" style="left:447.0px;top:1454.2px;" width="16" height="16" viewBox="0 0 16 16" fill="none"><circle cx="8.0" cy="8.0" r="7.25" stroke="#8e99ac" stroke-width="1.3"/><circle cx="8.1" cy="4.4" r="1.0" fill="#8e99ac"/><path d="M6.2 7.3H8.3V11.7M5.6 11.7H10.5" stroke="#8e99ac" stroke-width="1.35"/></svg>
<div class="t" style="left:303.60px;top:1481.00px;font-size:14.7px;line-height:14.7px;color:#5f6b80;letter-spacing:0.142px;">Current Configuration</div>
<svg class="a" style="left:313px;top:1527px;" width="16" height="16" viewBox="0 0 16 16" fill="none"><circle cx="8" cy="8" r="7.2" stroke="#8e99ac" stroke-width="1.3"/><path d="M8 4.4V11.6M4.4 8H11.6" stroke="#8e99ac" stroke-width="1.3"/></svg>
<div class="t" style="left:337.60px;top:1528.00px;font-size:14.7px;line-height:14.7px;color:#0f1d45;letter-spacing:0.057px;">Add Cloud Connect</div>
<div class="t" style="left:511.90px;top:1529.00px;font-size:14.7px;line-height:14.7px;color:#9aa3b5;letter-spacing:0.034px;">2 items</div>
<svg class="a" style="left:307px;top:1563.5px;" width="16" height="17" viewBox="0 0 16 17" fill="none"><ellipse cx="8" cy="2.9" rx="7.1" ry="2.2" stroke="#8e99ac" stroke-width="1.2"/><path d="M1.1 3.6L6.1 9.3V14.3A1.9 1.9 0 0 0 9.9 14.3V9.3L14.9 3.6" stroke="#8e99ac" stroke-width="1.2" stroke-linejoin="round"/></svg>
<div class="t" style="left:331.80px;top:1565.00px;font-size:14.7px;line-height:14.7px;color:#3a6ef2;letter-spacing:0.004px;">Add Filter</div>
<div class="a" style="left:1310px;top:1519px;width:180px;height:32px;background:#fff;border:1px solid #8590a6;border-radius:4px;box-sizing:border-box;"></div>
<svg class="a" style="left:1318px;top:1527px;" width="17" height="17" viewBox="0 0 17 17" fill="none"><circle cx="7" cy="7" r="6" stroke="#8e99ac" stroke-width="1.4"/><path d="M11.4 11.4L15.8 15.8" stroke="#8e99ac" stroke-width="1.4" stroke-linecap="round"/></svg>
<div class="t" style="left:1343.50px;top:1528.00px;font-size:14.7px;line-height:14.7px;color:#9aa3b5;letter-spacing:-0.234px;">Search</div>
<svg class="a" style="left:1520px;top:1531px;" width="13" height="8" viewBox="0 0 13 8" fill="none"><path d="M1 7L6.5 1.5L12 7" stroke="#5f6b80" stroke-width="1.4" stroke-linecap="round" stroke-linejoin="round"/></svg>
<div class="t" style="left:1539.70px;top:1528.00px;font-size:14.7px;line-height:14.7px;color:#0f1d45;letter-spacing:0.067px;">Hide Filter</div>
<svg class="a" style="left:1649px;top:1527px;" width="16" height="16" viewBox="0 0 16 16" fill="none"><path d="M13.26 6.08 L15.11 6.36 L15.11 9.64 L13.26 9.92 L13.08 10.37 L14.19 11.87 L11.87 14.19 L10.37 13.08 L9.92 13.26 L9.64 15.11 L6.36 15.11 L6.08 13.26 L5.63 13.08 L4.13 14.19 L1.81 11.87 L2.92 10.37 L2.74 9.92 L0.89 9.64 L0.89 6.36 L2.74 6.08 L2.92 5.63 L1.81 4.13 L4.13 1.81 L5.63 2.92 L6.08 2.74 L6.36 0.89 L9.64 0.89 L9.92 2.74 L10.37 2.92 L11.87 1.81 L14.19 4.13 L13.08 5.63Z" stroke="#8e99ac" stroke-width="1.2" stroke-linejoin="round"/><circle cx="8" cy="8" r="2.4" stroke="#8e99ac" stroke-width="1.2"/></svg>
<div class="a" style="left:283px;top:1601px;width:1410px;height:38px;background:#f3f5f8;"></div>
<div class="t" style="left:313.10px;top:1615.00px;font-size:12.3px;line-height:12.3px;color:#5a6780;font-weight:700;letter-spacing:-0.018px;">Name</div>
<div class="t" style="left:457.00px;top:1615.00px;font-size:12.3px;line-height:12.3px;color:#5a6780;font-weight:700;letter-spacing:-0.048px;">Status</div>
<div class="t" style="left:620.50px;top:1615.00px;font-size:12.3px;line-height:12.3px;color:#5a6780;font-weight:700;letter-spacing:-0.115px;">Provider</div>
<div class="t" style="left:784.40px;top:1615.00px;font-size:12.3px;line-height:12.3px;color:#5a6780;font-weight:700;letter-spacing:-0.132px;">Region</div>
<div class="t" style="left:948.30px;top:1615.00px;font-size:12.3px;line-height:12.3px;color:#5a6780;font-weight:700;letter-spacing:-0.061px;">Customer Edge</div>
<div class="t" style="left:1112.00px;top:1615.00px;font-size:12.3px;line-height:12.3px;color:#5a6780;font-weight:700;letter-spacing:0.098px;">Credential</div>
<div class="t" style="left:1275.50px;top:1615.00px;font-size:12.3px;line-height:12.3px;color:#5a6780;font-weight:700;letter-spacing:0.111px;">Segment</div>
<div class="t" style="left:1439.50px;top:1615.00px;font-size:12.3px;line-height:12.3px;color:#5a6780;font-weight:700;letter-spacing:-0.045px;">Onboarded VPCs</div>
<div class="t" style="right:53.20px;top:1615.00px;font-size:12.3px;line-height:12.3px;color:#5a6780;font-weight:700;letter-spacing:0.1px;">Actions</div>
<svg class="a" style="left:502px;top:1613px;" width="8" height="14" viewBox="0 0 8 14" fill="none"><path d="M0.8 5.4L4 1.6L7.2 5.4z" fill="#8e99ac"/><path d="M0.8 8.2L4 12L7.2 8.2z" fill="#c9cfdb"/></svg>
<div class="t" style="left:313.10px;top:1667.00px;font-size:14.7px;line-height:14.7px;color:#0f1d45;letter-spacing:0.224px;text-decoration:underline;text-underline-offset:2px;">tora-cc01-sep16</div>
<div class="a" style="left:457px;top:1669px;width:10px;height:10px;background:#ffb537;border-radius:50%;"></div>
<div class="t" style="left:474.40px;top:1667.00px;font-size:14.7px;line-height:14.7px;color:#0f1d45;letter-spacing:0.123px;">Degraded</div>
<svg class="a" style="left:621px;top:1666px;" width="20" height="13" viewBox="0 0 20 13" fill="none"><text x="10" y="8.2" text-anchor="middle" font-family="Liberation Sans" font-size="10.5" fill="#8c97aa" letter-spacing="-0.3">aws</text><path d="M2.3 9.8c4.4 2.4 10.4 2.4 15 0" stroke="#8c97aa" stroke-width="1" fill="none"/><path d="M15.6 9.1l2.2 0.5-0.8 2" stroke="#8c97aa" stroke-width="0.9" fill="none"/></svg>
<div class="t" style="left:784.40px;top:1667.00px;font-size:14.7px;line-height:14.7px;color:#0f1d45;letter-spacing:0.46px;">eu-west-2</div>
<div class="t" style="left:948.30px;top:1657.00px;font-size:14.7px;line-height:14.7px;color:#0f1d45;letter-spacing:0.445px;text-decoration:underline;text-underline-offset:2px;">tora-staging-</div>
<div class="t" style="left:948.30px;top:1677.00px;font-size:14.7px;line-height:14.7px;color:#0f1d45;letter-spacing:0.178px;text-decoration:underline;text-underline-offset:2px;">ongoing-netseg01</div>
<div class="t" style="left:1112.00px;top:1667.00px;font-size:14.7px;line-height:14.7px;color:#0f1d45;letter-spacing:0.25px;">aws-tora</div>
<div class="t" style="left:1275.50px;top:1667.00px;font-size:14.7px;line-height:14.7px;color:#3a6ef2;letter-spacing:0.179px;">tora-netseg01-sep16</div>
<div class="t" style="left:1438.50px;top:1667.00px;font-size:14.7px;line-height:14.7px;color:#0f1d45;letter-spacing:0.075px;text-decoration:underline;text-underline-offset:2px;">1/2</div>
<svg class="a" style="left:1638px;top:1672px;" width="18" height="4" viewBox="0 0 18 4" fill="none"><circle cx="2" cy="2" r="2" fill="#8e99ac"/><circle cx="9" cy="2" r="2" fill="#8e99ac"/><circle cx="16" cy="2" r="2" fill="#8e99ac"/></svg>
<div class="a" style="left:303px;top:1707px;width:1370px;height:1px;background:#e2e6ee;"></div>
<div class="t" style="left:313.10px;top:1735.00px;font-size:14.7px;line-height:14.7px;color:#0f1d45;letter-spacing:0.543px;text-decoration:underline;text-underline-offset:2px;">tora-cc02</div>
<div class="a" style="left:457px;top:1737px;width:10px;height:10px;background:#00c767;border-radius:50%;"></div>
<div class="t" style="left:474.40px;top:1735.00px;font-size:14.7px;line-height:14.7px;color:#0f1d45;letter-spacing:1.093px;">Up</div>
<svg class="a" style="left:621px;top:1734px;" width="20" height="13" viewBox="0 0 20 13" fill="none"><text x="10" y="8.2" text-anchor="middle" font-family="Liberation Sans" font-size="10.5" fill="#8c97aa" letter-spacing="-0.3">aws</text><path d="M2.3 9.8c4.4 2.4 10.4 2.4 15 0" stroke="#8c97aa" stroke-width="1" fill="none"/><path d="M15.6 9.1l2.2 0.5-0.8 2" stroke="#8c97aa" stroke-width="0.9" fill="none"/></svg>
<div class="t" style="left:784.40px;top:1735.00px;font-size:14.7px;line-height:14.7px;color:#0f1d45;letter-spacing:0.46px;">eu-west-2</div>
<div class="t" style="left:948.30px;top:1725.00px;font-size:14.7px;line-height:14.7px;color:#0f1d45;letter-spacing:0.445px;text-decoration:underline;text-underline-offset:2px;">tora-staging-</div>
<div class="t" style="left:948.30px;top:1745.00px;font-size:14.7px;line-height:14.7px;color:#0f1d45;letter-spacing:0.178px;text-decoration:underline;text-underline-offset:2px;">ongoing-netseg01</div>
<div class="t" style="left:1112.00px;top:1735.00px;font-size:14.7px;line-height:14.7px;color:#0f1d45;letter-spacing:0.25px;">aws-tora</div>
<div class="t" style="left:1275.50px;top:1735.00px;font-size:14.7px;line-height:14.7px;color:#3a6ef2;letter-spacing:0.301px;">tora-netseg02-sep16</div>
<div class="t" style="left:1438.50px;top:1735.00px;font-size:14.7px;line-height:14.7px;color:#0f1d45;letter-spacing:-0.825px;text-decoration:underline;text-underline-offset:2px;">1/1</div>
<svg class="a" style="left:1638px;top:1740px;" width="18" height="4" viewBox="0 0 18 4" fill="none"><circle cx="2" cy="2" r="2" fill="#8e99ac"/><circle cx="9" cy="2" r="2" fill="#8e99ac"/><circle cx="16" cy="2" r="2" fill="#8e99ac"/></svg>
<div class="a" style="left:303px;top:1775px;width:1370px;height:1px;background:#e2e6ee;"></div>
<div class="a" style="left:1674px;top:1592px;width:45px;height:88px;background:#fff;border:1px solid #e2e6ee;border-left:4px solid #2f64f0;border-radius:6px 0 0 6px;box-sizing:border-box;box-shadow:-6px 0 14px rgba(40,50,80,0.08);"></div>
<svg class="a" style="left:1686px;top:1606px;" width="16" height="16" viewBox="0 0 16 16" fill="none"><circle cx="8" cy="8" r="7.1" stroke="#2f64f0" stroke-width="1.4"/><path d="M5.9 6.2a2.1 2.1 0 1 1 3 1.9c-0.6 0.3-0.9 0.7-0.9 1.3v0.5" stroke="#2f64f0" stroke-width="1.4" stroke-linecap="round"/><circle cx="8" cy="11.9" r="0.9" fill="#2f64f0"/></svg>
<div class="t" style="left:1665px;top:1642px;width:60px;height:20px;line-height:20px;text-align:center;font-size:15.8px;color:#2a2a2a;transform:rotate(-90deg)">Help</div>
</div></body></html>
